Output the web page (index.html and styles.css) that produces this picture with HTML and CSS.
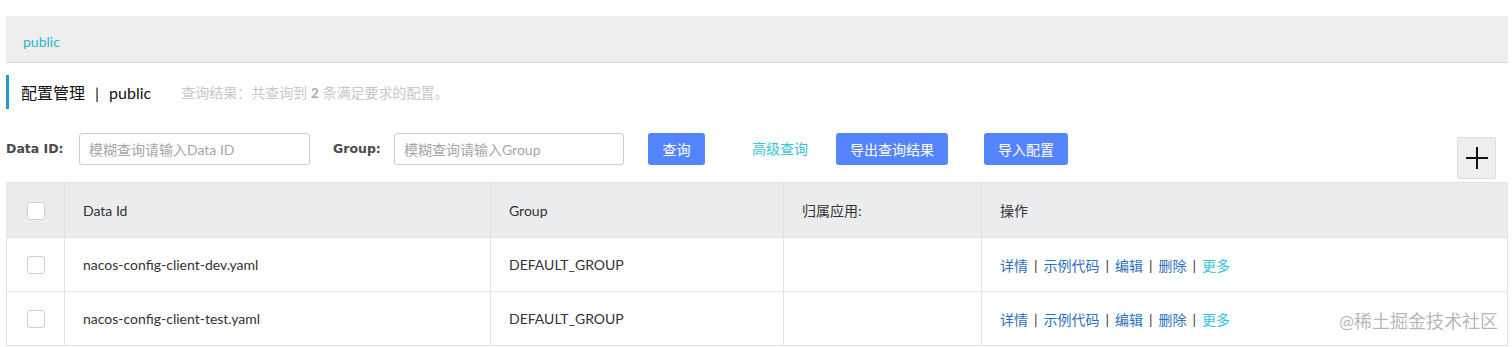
FILE: index.html
```html
<!DOCTYPE html>
<html lang="zh-CN">
<head>
  <meta charset="UTF-8" />
  <title>配置管理</title>
  <link rel="stylesheet" href="styles.css">
</head>
<body>
  <div class="page">
    <div class="ns-bar">
      <a class="ns-link">public</a>
    </div>

    <div class="page-title">
      <span class="title-main">配置管理<span class="title-sep">|</span>public</span>
      <span class="title-sub">查询结果：共查询到 <strong>2</strong> 条满足要求的配置。</span>
    </div>

    <div class="search-row">
      <label class="search-label label-id">Data ID:</label>
      <input class="search-input input-id" type="text" placeholder="模糊查询请输入Data ID">
      <label class="search-label label-group">Group:</label>
      <input class="search-input input-group" type="text" placeholder="模糊查询请输入Group">
      <button class="btn btn-query">查询</button>
      <a class="adv-link">高级查询</a>
      <button class="btn btn-export">导出查询结果</button>
      <button class="btn btn-import">导入配置</button>
      <button class="btn-add" aria-label="新建">
        <svg width="22" height="22" viewBox="0 0 22 22">
          <path d="M11 0 V22 M0 11 H22" stroke="#111" stroke-width="2" fill="none"/>
        </svg>
      </button>
    </div>

    <div class="table-wrap">
      <table class="config-table">
        <colgroup>
          <col class="col-check">
          <col class="col-id">
          <col class="col-group">
          <col class="col-app">
          <col class="col-ops">
        </colgroup>
        <thead>
          <tr>
            <th class="cell-check"><span class="checkbox"></span></th>
            <th>Data Id</th>
            <th>Group</th>
            <th>归属应用:</th>
            <th>操作</th>
          </tr>
        </thead>
        <tbody>
          <tr>
            <td class="cell-check"><span class="checkbox"></span></td>
            <td>nacos-config-client-dev.yaml</td>
            <td>DEFAULT_GROUP</td>
            <td></td>
            <td class="ops">
              <a>详情</a><span class="sep">|</span><a>示例代码</a><span class="sep">|</span><a>编辑</a><span class="sep">|</span><a>删除</a><span class="sep">|</span><a class="more">更多</a>
            </td>
          </tr>
          <tr>
            <td class="cell-check"><span class="checkbox"></span></td>
            <td>nacos-config-client-test.yaml</td>
            <td>DEFAULT_GROUP</td>
            <td></td>
            <td class="ops">
              <a>详情</a><span class="sep">|</span><a>示例代码</a><span class="sep">|</span><a>编辑</a><span class="sep">|</span><a>删除</a><span class="sep">|</span><a class="more">更多</a>
            </td>
          </tr>
        </tbody>
      </table>
      <div class="watermark">@稀土掘金技术社区</div>
    </div>
  </div>
</body>
</html>
```

FILE: styles.css
```css
html, body {
  margin: 0;
  padding: 0;
  background: white;
  color: #333;
  font-family: Lato, "Noto Sans CJK SC", sans-serif;
  font-size: 14px;
}

.page {
  padding: 16px 4px 0 6px;
}

.ns-bar {
  height: 47px;
  box-sizing: border-box;
  background: #eeeeee;
  border-bottom: 1px solid #d9d9d9;
  display: flex;
  align-items: center;
  padding: 5px 0 0 17px;
}

.ns-link {
  color: #2ab6cc;
  font-size: 14px;
}

.page-title {
  margin-top: 12px;
  height: 34px;
  border-left: 3px solid #1d9bd4;
  padding-left: 12px;
  display: flex;
  align-items: center;
}

.title-main {
  font-size: 16px;
  color: #111;
}

.title-sep {
  margin: 0 10px;
}

.title-sub {
  margin-left: 30px;
  font-size: 14px;
  color: #c8c8c8;
}

.title-sub strong {
  color: #aaa;
}

.search-row {
  margin-top: 24px;
  display: flex;
  align-items: flex-start;
  height: 46px;
}

.search-label {
  font-family: "DejaVu Sans", sans-serif;
  font-size: 12.5px;
  font-weight: bold;
  color: #4a4a4a;
  line-height: 32px;
}

.label-id {
  width: 73px;
}

.label-group {
  width: 61px;
  margin-left: 23px;
}

.search-input {
  box-sizing: border-box;
  height: 32px;
  width: 231px;
  border: 1px solid #ccc;
  border-radius: 3px;
  padding: 0 9px;
  font-family: inherit;
  font-size: 14px;
  color: #333;
  outline: none;
}

.search-input::placeholder {
  color: #a6a6a6;
}

.input-group {
  width: 230px;
}

.btn {
  box-sizing: border-box;
  height: 32px;
  border: none;
  border-radius: 3px;
  background: #5584ff;
  color: white;
  font-family: inherit;
  font-size: 14px;
  padding: 0;
  cursor: pointer;
}

.btn-query {
  width: 57px;
  margin-left: 24px;
}

.adv-link {
  margin-left: 47px;
  width: 84px;
  line-height: 32px;
  color: #39c3d8;
  font-size: 14px;
}

.btn-export {
  width: 112px;
}

.btn-import {
  width: 84px;
  margin-left: 36px;
}

.btn-add {
  margin: 4px 12px 0 auto;
  width: 39px;
  height: 42px;
  box-sizing: border-box;
  background: #eeeeee;
  border: 1px solid #dcdcdc;
  border-radius: 2px;
  display: flex;
  align-items: center;
  justify-content: center;
  padding: 0;
}

.table-wrap {
  position: relative;
  margin-top: 3px;
}

.config-table {
  width: 100%;
  border-collapse: collapse;
  table-layout: fixed;
  border: 1px solid #e3e3e3;
}

.col-check { width: 58px; }
.col-id { width: 426px; }
.col-group { width: 293px; }
.col-app { width: 198px; }

.config-table th,
.config-table td {
  border: 1px solid #e3e3e3;
  padding: 0 18px;
  text-align: left;
  font-weight: normal;
  font-size: 14px;
  color: #333;
}

.config-table th {
  background: #ebecee;
  height: 54px;
}

.config-table td {
  height: 53px;
}

.config-table .cell-check {
  padding: 0;
  text-align: center;
}

.checkbox {
  display: inline-block;
  vertical-align: middle;
  width: 18px;
  height: 18px;
  box-sizing: border-box;
  border: 1px solid #cfcfcf;
  border-radius: 3px;
  background: white;
}

.ops a {
  color: #2e6fc0;
}

.ops .more {
  color: #39c3d8;
}

.sep {
  margin: 0 6px;
  color: #333;
}

.watermark {
  position: absolute;
  right: 10px;
  bottom: 13px;
  font-size: 18px;
  color: rgba(120, 120, 120, 0.55);
  pointer-events: none;
}
```
